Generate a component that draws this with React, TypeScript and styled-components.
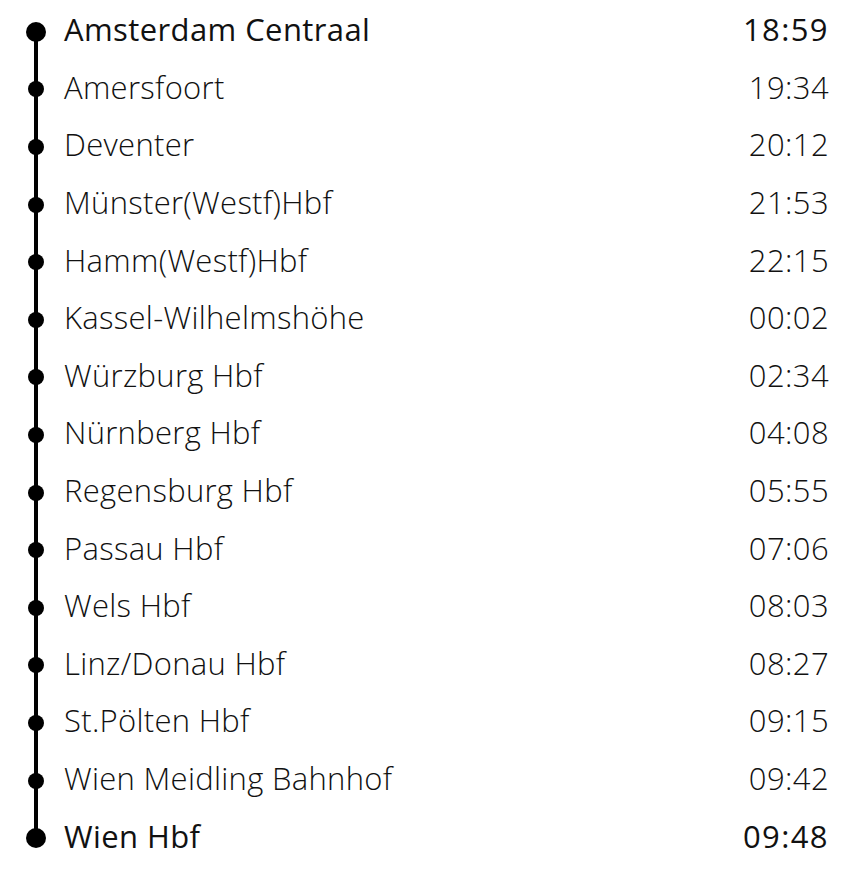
import React from 'react';
import styled, { createGlobalStyle } from 'styled-components';

type Stop = { name: string; time: string };

const STOPS: Stop[] = [
  { name: 'Amsterdam Centraal', time: '18:59' },
  { name: 'Amersfoort', time: '19:34' },
  { name: 'Deventer', time: '20:12' },
  { name: 'Münster(Westf)Hbf', time: '21:53' },
  { name: 'Hamm(Westf)Hbf', time: '22:15' },
  { name: 'Kassel-Wilhelmshöhe', time: '00:02' },
  { name: 'Würzburg Hbf', time: '02:34' },
  { name: 'Nürnberg Hbf', time: '04:08' },
  { name: 'Regensburg Hbf', time: '05:55' },
  { name: 'Passau Hbf', time: '07:06' },
  { name: 'Wels Hbf', time: '08:03' },
  { name: 'Linz/Donau Hbf', time: '08:27' },
  { name: 'St.Pölten Hbf', time: '09:15' },
  { name: 'Wien Meidling Bahnhof', time: '09:42' },
  { name: 'Wien Hbf', time: '09:48' },
];

const GlobalStyle = createGlobalStyle`
  body {
    margin: 0;
    background: #ffffff;
    font-family: "Open Sans", "Noto Sans", "Liberation Sans", sans-serif;
    color: #111111;
  }
`;

const App = () => {
  return (
    <>
      <GlobalStyle />
      <Timeline>
        {STOPS.map((stop, i) => {
          const first = i === 0;
          const last = i === STOPS.length - 1;
          const terminal = first || last;
          return (
            <Row key={stop.name}>
              <Marker $first={first} $last={last}>
                <Dot $big={terminal} />
              </Marker>
              <Name $bold={terminal}>{stop.name}</Name>
              <Time $bold={terminal}>{stop.time}</Time>
            </Row>
          );
        })}
      </Timeline>
    </>
  );
};

const Timeline = styled.div`
  width: 850px;
  padding: 3px 22px 0 0;
  box-sizing: border-box;
  display: flex;
  flex-direction: column;
`;

const Row = styled.div`
  display: grid;
  grid-template-columns: 64px 1fr auto;
  align-items: center;
  height: 57.6px;
`;

const Marker = styled.div<{ $first: boolean; $last: boolean }>`
  position: relative;
  height: 100%;
  display: flex;
  align-items: center;

  &::before {
    content: '';
    position: absolute;
    left: 33.5px;
    width: 4px;
    background: #000000;
    top: ${(p) => (p.$first ? '50%' : '0')};
    bottom: ${(p) => (p.$last ? '50%' : '0')};
  }
`;

const Dot = styled.span<{ $big: boolean }>`
  position: relative;
  margin-left: ${(p) => (p.$big ? '25.5px' : '27.5px')};
  width: ${(p) => (p.$big ? '20px' : '16px')};
  height: ${(p) => (p.$big ? '20px' : '16px')};
  border-radius: 50%;
  background: #000000;
`;

const Name = styled.div<{ $bold: boolean }>`
  font-size: 31px;
  font-weight: ${(p) => (p.$bold ? 500 : 300)};
  letter-spacing: ${(p) => (p.$bold ? '0.4px' : '0.3px')};
  white-space: nowrap;
  margin-top: -5px;
`;

const Time = styled.div<{ $bold: boolean }>`
  font-size: 31px;
  font-weight: ${(p) => (p.$bold ? 500 : 300)};
  letter-spacing: ${(p) => (p.$bold ? '1.4px' : '0.4px')};
  margin-right: -1px;
  margin-top: -5px;
  text-align: right;
`;

export default App;
